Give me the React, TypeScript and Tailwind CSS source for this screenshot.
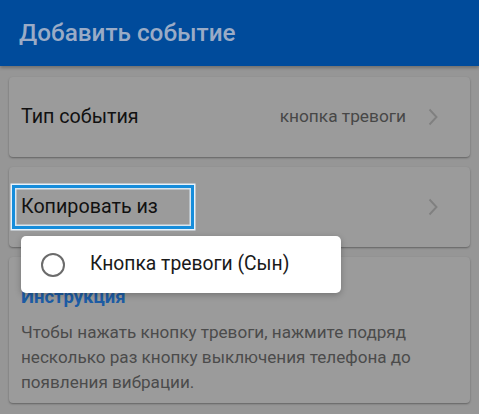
import React from "react";

const Chevron = () => (
	<svg width="12" height="18" viewBox="0 0 12 18" className="shrink-0">
		<path d="M2.5 1.5 L9.5 9 L2.5 16.5" fill="none" stroke="#808080" strokeWidth="1.9" />
	</svg>
);

export default function App() {
	return (
		<div
			className="relative w-[479px] h-[414px] overflow-hidden bg-[#969696]"
			style={{ fontFamily: "Roboto, 'Noto Sans', sans-serif" }}
		>
			{/* Header */}
			<div className="h-[66px] bg-[#004b9b] flex items-center pl-[19px] shadow-[0_2px_3px_rgba(0,0,0,0.25)]">
				<h1 className="text-[24.3px] font-medium text-[#9aabc6]">Добавить событие</h1>
			</div>

			<div className="flex flex-col gap-[10px] px-[9px] pt-[11px]">
				{/* Event type */}
				<div className="h-[80px] rounded-[4px] bg-[#9b9b9b] shadow-[0_1px_2px_rgba(0,0,0,0.35)] flex items-center justify-between pl-[12px] pr-[31px]">
					<span className="text-[19.7px] text-[#111]">Тип события</span>
					<div className="flex items-center gap-[21px]">
						<span className="text-[17.3px] text-[#474747]">кнопка тревоги</span>
						<Chevron />
					</div>
				</div>

				{/* Copy from */}
				<div className="h-[80px] rounded-[4px] bg-[#9b9b9b] shadow-[0_1px_2px_rgba(0,0,0,0.35)] flex items-center justify-between pl-[3px] pr-[31px]">
					<span className="w-[182px] h-[44px] flex items-center pl-[6px] border-[3px] border-[#168ddb] shadow-[0_0_0_1.5px_#e6f2fb,inset_0_0_0_1.5px_#d8e6f0] text-[19.7px] text-[#111]">
						Копировать из
					</span>
					<Chevron />
				</div>

				{/* Instruction */}
				<div className="h-[146px] rounded-[4px] bg-[#9b9b9b] shadow-[0_1px_2px_rgba(0,0,0,0.35)] pl-[12px] pr-[10px] pt-[27px]">
					<div className="text-[18.5px] font-bold text-[#1d5ca4] leading-[26px]">Инструкция</div>
					<p className="mt-[10px] text-[17.1px] leading-[25px] text-[#4b4b4b]">
						Чтобы нажать кнопку тревоги, нажмите подряд несколько раз кнопку выключения телефона до появления вибрации.
					</p>
				</div>
			</div>

			{/* Popup */}
			<div className="absolute left-[21px] top-[236px] w-[320px] h-[57px] rounded-[5px] bg-white shadow-[0_2px_6px_rgba(0,0,0,0.25)] flex items-center pl-[20px]">
				<span className="w-[24px] h-[24px] rounded-full border-2 border-[#6b6b6b]" />
				<span className="ml-[25px] text-[19.3px] text-[#1a1a1a]">Кнопка тревоги (Сын)</span>
			</div>
		</div>
	);
}
